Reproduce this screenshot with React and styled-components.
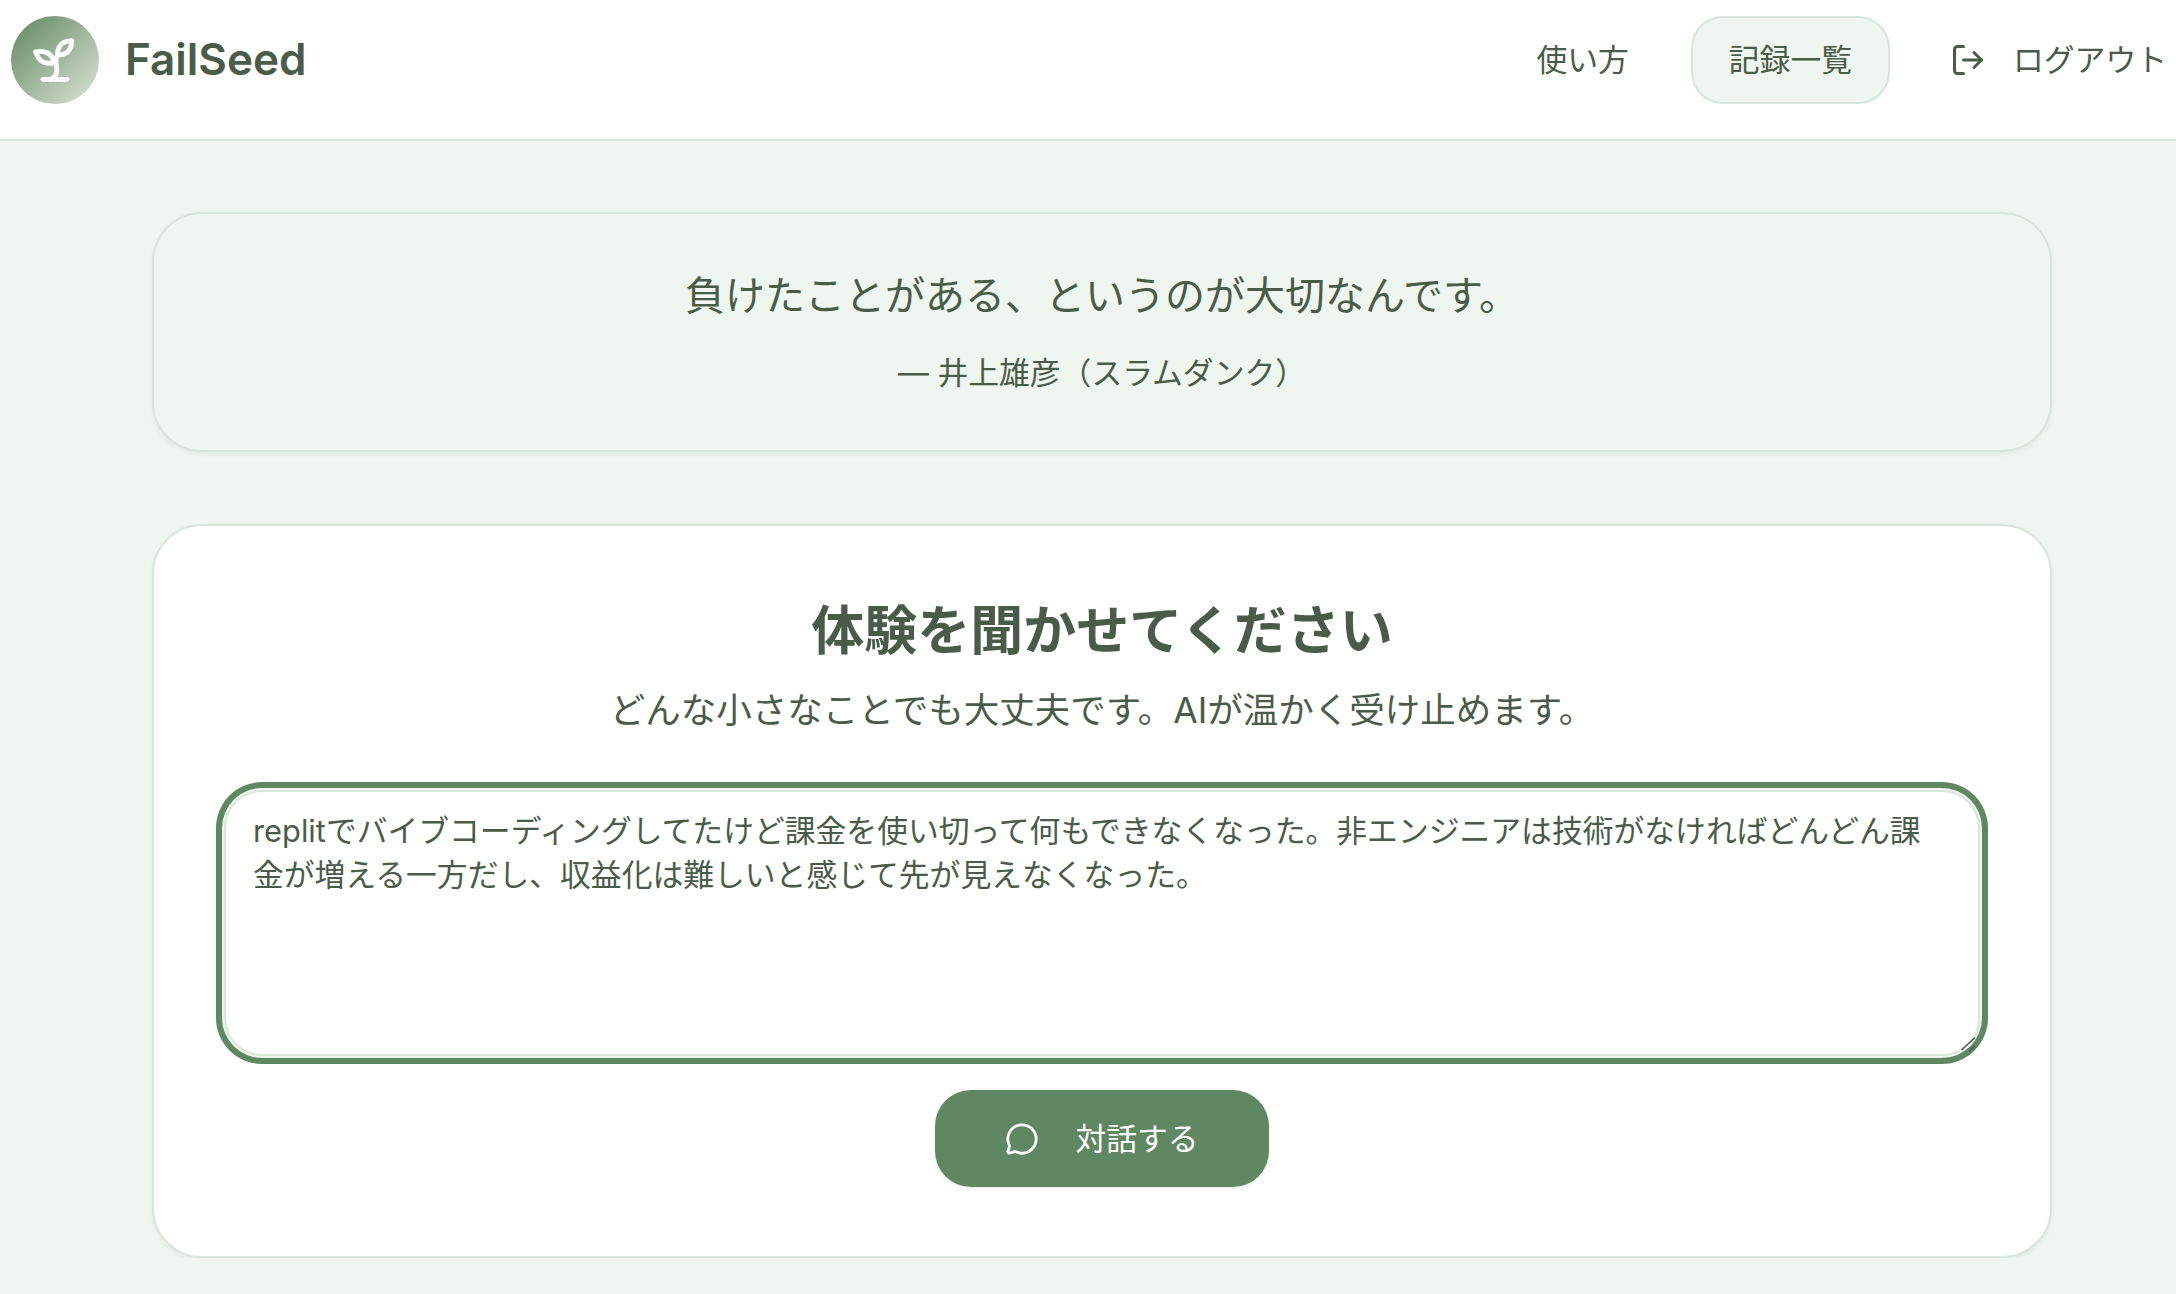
import React from 'react';
import styled, { createGlobalStyle } from 'styled-components';
import { LogOut, MessageCircle } from 'lucide-react';

const text = '#4a5c49';
const green = '#5f8761';
const line = '#d8e6db';
const page = '#eff5ef';
const stack = `Inter, 'Noto Sans CJK JP', sans-serif`;

const Global = createGlobalStyle`
  html, body { margin: 0; padding: 0; }
  body {
    background: ${page};
    color: ${text};
    font-family: ${stack};
    overflow: hidden;
  }
  * { box-sizing: border-box; }
`;

// the page is a little wider than the window, the logout link runs to the edge
const Page = styled.div`
  width: 2204px;
`;

const Header = styled.header`
  height: 141px;
  background: #fefefe;
  border-bottom: 2px solid ${line};
  display: flex;
  align-items: flex-start;
  justify-content: space-between;
  padding: 16px 2px 0 11px;
`;

const Brand = styled.div`
  display: flex;
  align-items: center;
  gap: 26px;
`;

const LogoMark = styled.div`
  width: 88px;
  height: 88px;
  border-radius: 50%;
  background: linear-gradient(135deg, #5f8761 0%, #dfe4d8 100%);
  display: flex;
  align-items: center;
  justify-content: center;
  color: #fff;
`;

const BrandName = styled.div`
  font-size: 44px;
  font-weight: 600;
  margin-bottom: 3px;
`;

const Nav = styled.nav`
  display: flex;
  align-items: center;
  gap: 24px;
  margin-right: -3px;
`;

const NavItem = styled.a`
  height: 88px;
  display: flex;
  align-items: center;
  gap: 27px;
  padding: 0 36px;
  font-size: 30.8px;
  border-radius: 32px;
  border: 2px solid ${p => (p.$active ? line : 'transparent')};
  background: ${p => (p.$active ? page : 'transparent')};
`;

const LogoutItem = styled(NavItem)`
  padding-left: 34px;
`;

const Label = styled.span`
  margin-bottom: 5px;
`;

const Main = styled.main`
  width: 1900px;
  margin: 0 auto;
  padding-top: 71px;
  display: flex;
  flex-direction: column;
  gap: 72px;
`;

const QuoteCard = styled.section`
  height: 240px;
  border: 2px solid ${line};
  border-radius: 50px;
  box-shadow: 0 2px 4px rgba(74, 92, 73, 0.08);
  background: ${page};
  display: flex;
  flex-direction: column;
  align-items: center;
  padding-top: 52px;
`;

const QuoteText = styled.p`
  margin: 0;
  font-size: 40px;
  line-height: 60px;
`;

const QuoteSource = styled.p`
  margin: 23px 0 0;
  font-size: 30.8px;
  line-height: 48px;
`;

const FormCard = styled.section`
  height: 734px;
  background: #fff;
  border: 2px solid ${line};
  border-radius: 50px;
  box-shadow: 0 2px 4px rgba(74, 92, 73, 0.08);
  display: flex;
  flex-direction: column;
  align-items: center;
  padding: 67px 70px 0;
`;

const Title = styled.h2`
  margin: 0;
  font-size: 53px;
  line-height: 76px;
  font-weight: 700;
`;

const Lead = styled.p`
  margin: 4px 0 0;
  font-size: 35.5px;
  line-height: 76px;
`;

const EntryWrap = styled.div`
  position: relative;
  width: 100%;
  margin-top: 41px;
`;

const Entry = styled.textarea`
  display: block;
  width: 100%;
  height: 266px;
  padding: 17px 27px;
  font-family: ${stack};
  font-size: 30.8px;
  line-height: 44px;
  color: ${text};
  background: #fff;
  border: 2px solid ${line};
  border-radius: 38px;
  box-shadow: 0 0 0 2px ${page}, 0 0 0 8px ${green};
  outline: none;
  resize: none;
`;

const Grip = styled.svg`
  position: absolute;
  right: 4px;
  bottom: 3px;
`;

const Submit = styled.button`
  width: 334px;
  height: 97px;
  margin-top: 34px;
  border: none;
  border-radius: 36px;
  background: ${green};
  color: #fff;
  font-family: ${stack};
  font-size: 30.8px;
  display: flex;
  align-items: center;
  justify-content: center;
  gap: 36px;
  box-shadow: 0 2px 4px rgba(74, 92, 73, 0.1);
`;

const story = 'replitでバイブコーディングしてたけど課金を使い切って何もできなくなった。非エンジニアは技術がなければどんどん課金が増える一方だし、収益化は難しいと感じて先が見えなくなった。';

function SproutIcon() {
  return (
    <svg width="58" height="58" viewBox="0 0 24 24" fill="none" stroke="currentColor" strokeWidth="2" strokeLinecap="round" strokeLinejoin="round">
      <path d="M7 20h10" />
      <path d="M10 20c5.5-2.5.8-6.4 3-10" />
      <path d="M9.5 9.4c1.1.8 1.8 2.2 2.3 3.7-2 .4-3.5.4-4.8-.3-1.2-.6-2.3-1.9-3-4.2 2.8-.5 4.4 0 5.5.8z" />
      <path d="M14.1 6a7 7 0 0 0-1.1 4c1.9-.1 3.3-.6 4.3-1.4 1-1 1.6-2.3 1.7-4.6-2.7.1-4 1-4.9 2z" />
    </svg>
  );
}

export default function App() {
  return (
    <Page>
      <Global />
      <Header>
        <Brand>
          <LogoMark><SproutIcon /></LogoMark>
          <BrandName>FailSeed</BrandName>
        </Brand>
        <Nav>
          <NavItem><Label>使い方</Label></NavItem>
          <NavItem $active><Label>記録一覧</Label></NavItem>
          <LogoutItem><LogOut size={36} strokeWidth={2} /><Label>ログアウト</Label></LogoutItem>
        </Nav>
      </Header>
      <Main>
        <QuoteCard>
          <QuoteText>負けたことがある、というのが大切なんです。</QuoteText>
          <QuoteSource>— 井上雄彦（スラムダンク）</QuoteSource>
        </QuoteCard>
        <FormCard>
          <Title>体験を聞かせてください</Title>
          <Lead>どんな小さなことでも大丈夫です。AIが温かく受け止めます。</Lead>
          <EntryWrap>
            <Entry defaultValue={story} />
            <Grip width="16" height="17" viewBox="0 0 16 17" fill="none" stroke="#5a5a5a" strokeWidth="1.6">
              <path d="M1.5 14 15 1.5" />
              <path d="M9 15.5 15 10" />
            </Grip>
          </EntryWrap>
          <Submit><MessageCircle size={34} strokeWidth={2} /><Label>対話する</Label></Submit>
        </FormCard>
      </Main>
    </Page>
  );
}
